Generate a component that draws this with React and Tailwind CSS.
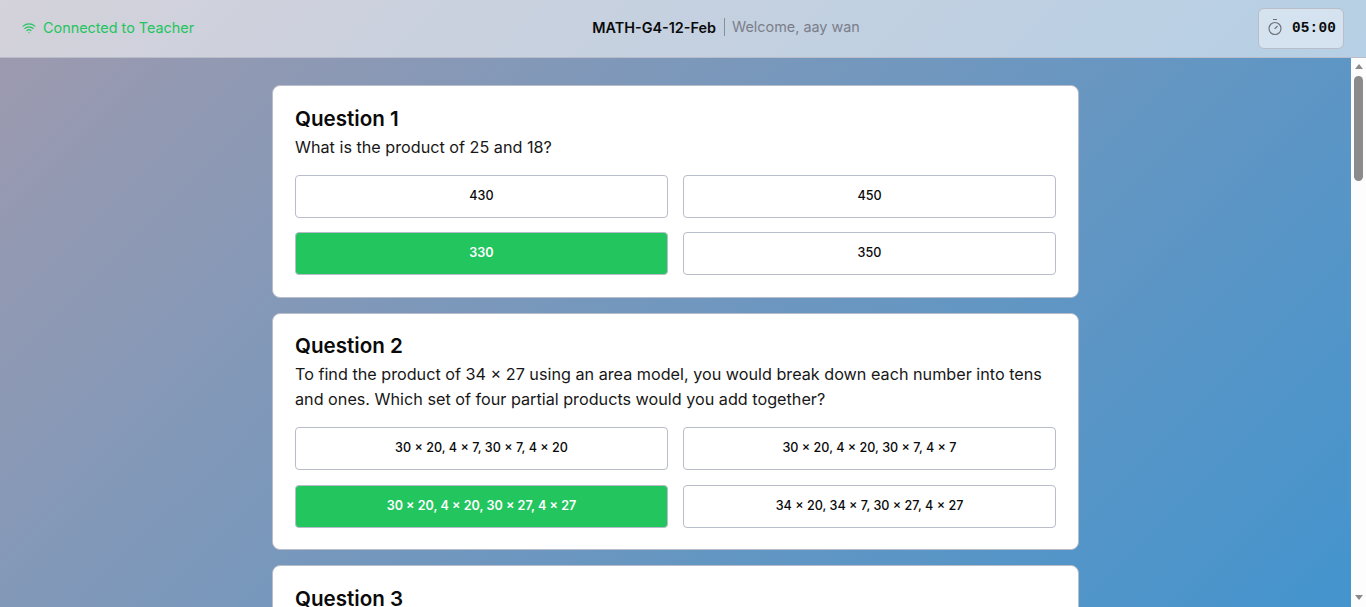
import { Timer, Wifi } from "lucide-react";

const questions = [
  {
    text: "What is the product of 25 and 18?",
    options: ["430", "450", "330", "350"],
    selected: 2,
  },
  {
    text: "To find the product of 34 × 27 using an area model, you would break down each number into tens and ones. Which set of four partial products would you add together?",
    options: [
      "30 × 20, 4 × 7, 30 × 7, 4 × 20",
      "30 × 20, 4 × 20, 30 × 7, 4 × 7",
      "30 × 20, 4 × 20, 30 × 27, 4 × 27",
      "34 × 20, 34 × 7, 30 × 27, 4 × 27",
    ],
    selected: 2,
  },
  { text: "What is the product of 42 and 16?", options: ["672", "652", "682", "662"] },
];

function QuestionCard({ number, question }) {
  return (
    <div className="bg-white border border-[#b9bcc9] rounded-lg px-[22px] pt-[18.2px] pb-[21.5px]">
      <h2 className="text-[20.6px] leading-[27px] font-semibold text-[#0a0a0a]">Question {number}</h2>
      <p className="text-[16.2px] leading-[24.6px] text-[#171717] mt-[3px] mb-[15.9px]">{question.text}</p>
      <div className="grid grid-cols-2 gap-x-[15px] gap-y-[14.4px]">
        {question.options.map((option, index) => (
          <button
            key={option}
            className={
              index === question.selected
                ? "h-[43px] rounded border border-[#b9bcc9] bg-[#22c55e] text-white text-[12.6px] font-semibold"
                : "h-[43px] rounded border border-[#b9bcc9] bg-white text-[#0a0a0a] text-[12.6px] font-medium"
            }
          >
            {option}
          </button>
        ))}
      </div>
    </div>
  );
}

export default function App() {
  return (
    <div className="h-screen flex flex-col overflow-hidden bg-[linear-gradient(135deg,#9f9aae,#4394ce)] font-['Inter',sans-serif]">
      <header className="h-[58px] shrink-0 flex justify-between items-center px-[22px] bg-white/[0.55] border-b border-[#b9bcc9]">
        <div className="flex items-center gap-[7px] text-[#22c55e] text-[14.4px] leading-[18px] -mt-[2px]">
          <Wifi size={14} />
          <span>Connected to Teacher</span>
        </div>
        <div className="flex items-center text-[14.4px] whitespace-nowrap -mt-[2px]">
          <span className="font-semibold text-[#0a0a0a]">MATH-G4-12-Feb</span>
          <span className="ml-2 pl-[7px] border-l border-[#8a8d99] leading-[18px] text-[#7b7e8a]">Welcome, aay wan</span>
        </div>
        <div className="h-[41px] w-[86px] flex items-center justify-center gap-[8px] rounded-md border border-[#b9bcc9] bg-white/40">
          <Timer size={18} strokeWidth={1.5} className="text-[#6b6e7a] mb-[3px]" />
          <span className="font-['Liberation_Mono',monospace] font-bold text-[14.4px] tracking-[0.2px] text-[#0a0a0a] mt-[1px]">05:00</span>
        </div>
      </header>
      <div className="flex-1 min-h-0 flex">
        <main className="flex-1 min-w-0 overflow-hidden pt-[27.35px]">
          <div className="w-[807px] mx-auto flex flex-col gap-[15.2px]">
            {questions.map((question, index) => (
              <QuestionCard key={question.text} number={index + 1} question={question} />
            ))}
          </div>
        </main>
        {/* scrollbar, the browser hides the native one */}
        <aside className="w-[15px] shrink-0 bg-[#fdfdfd] flex flex-col items-center pt-[6px] pb-[7px]">
          <span className="w-0 h-0 border-x-[4.5px] border-x-transparent border-b-[5px] border-b-[#8b8b8b]" />
          <div className="w-[9px] h-[105px] mt-[7px] rounded-full bg-[#8b8b8b]" />
          <span className="mt-auto w-0 h-0 border-x-[4.5px] border-x-transparent border-t-[5px] border-t-[#8b8b8b]" />
        </aside>
      </div>
    </div>
  );
}
